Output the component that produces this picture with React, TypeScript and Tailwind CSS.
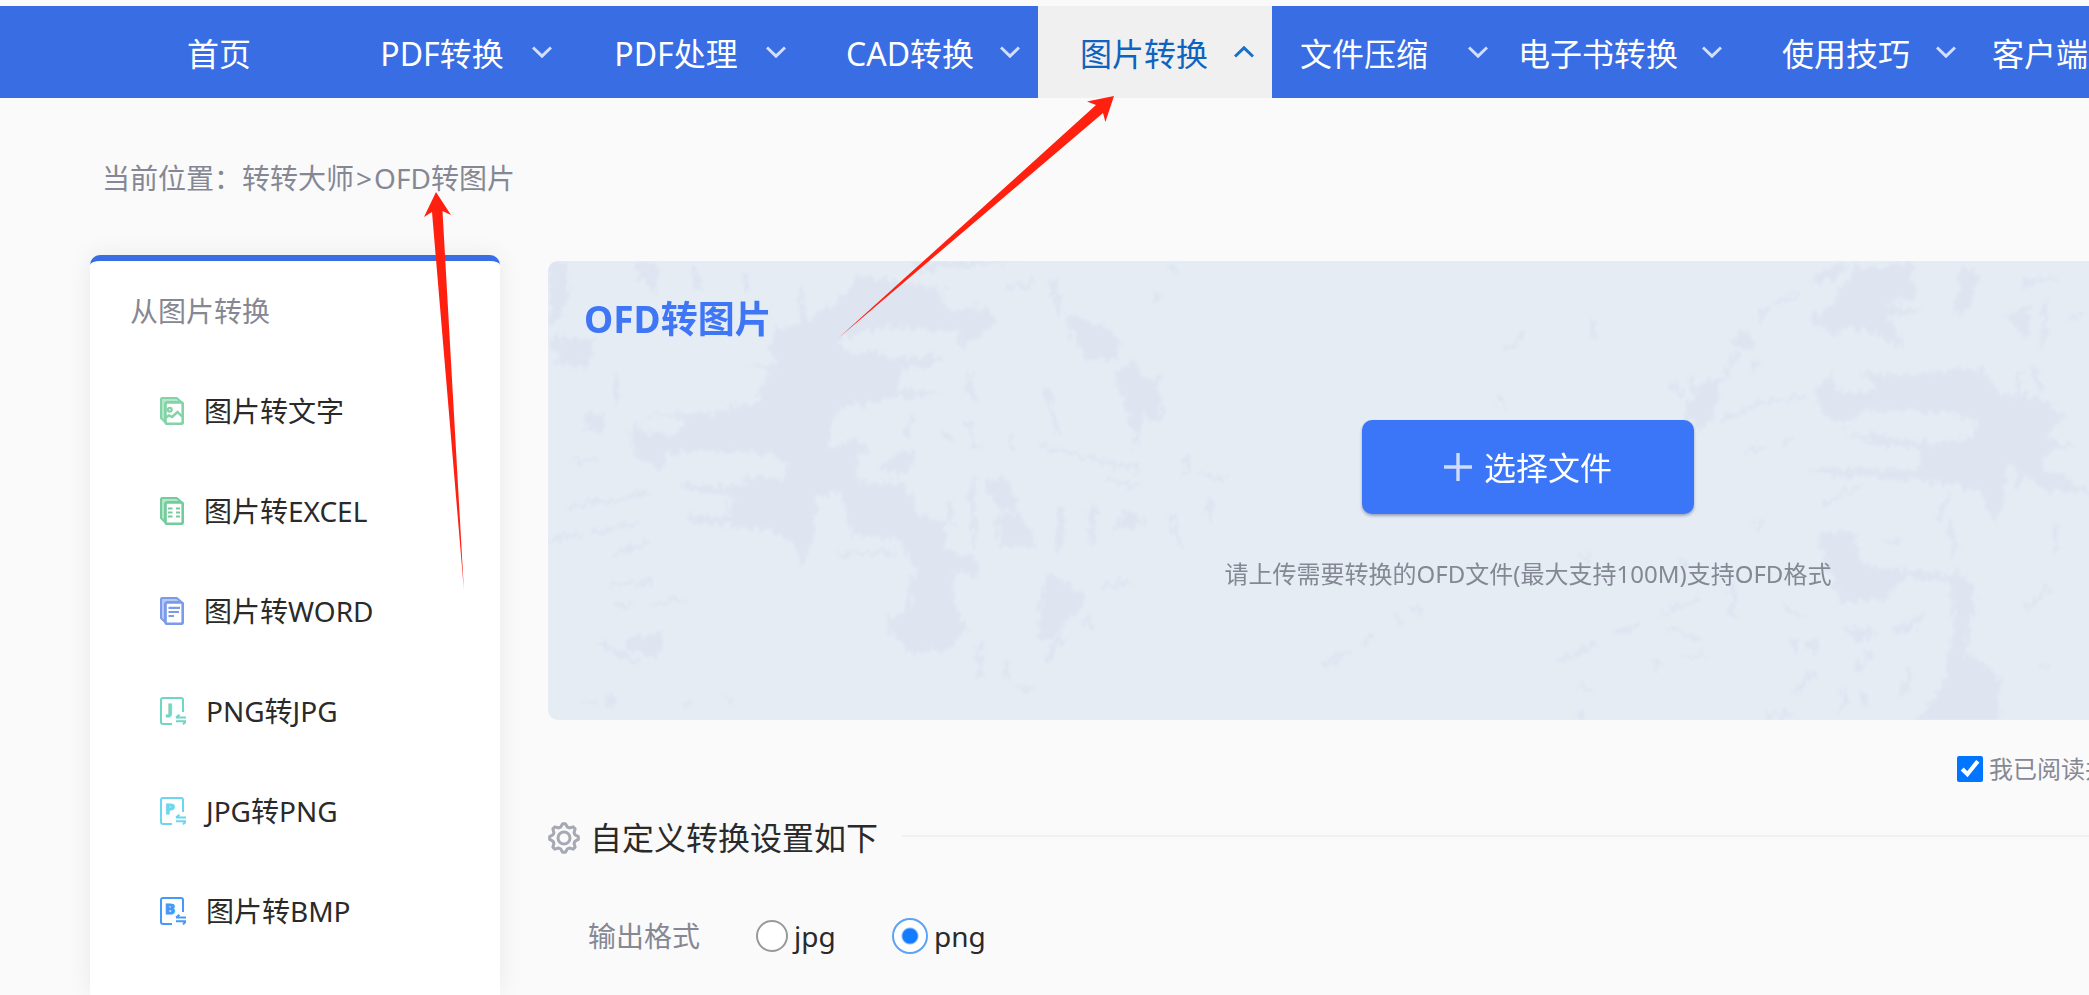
import React, { useState } from 'react';

type NavEntry = {
  label: string;
  menu?: boolean;
  pad?: string;
};

const navItems: NavEntry[] = [
  { label: '首页' },
  { label: 'PDF转换', menu: true, pad: 'pl-4' },
  { label: 'PDF处理', menu: true, pad: 'pl-4' },
  { label: 'CAD转换', menu: true, pad: 'pl-4' },
  { label: '图片转换', menu: true, pad: 'pl-4' },
  { label: '文件压缩', menu: true, pad: 'pr-3' },
  { label: '电子书转换', menu: true, pad: 'pr-3' },
  { label: '使用技巧', menu: true, pad: 'pl-4' },
  { label: '客户端下载', menu: true },
];

const Chevron = ({ up }: { up?: boolean }) => (
  <svg
    viewBox="0 0 20 12"
    className={up ? 'w-5 h-3 mr-[18px] text-[#1a6fc9]' : 'w-5 h-3 mr-[18px] text-[#d3defb]'}
    fill="none"
    stroke="currentColor"
    strokeWidth="3"
  >
    <path d={up ? 'M1 10.5 L10 1.8 L19 10.5' : 'M1 1.5 L10 10.2 L19 1.5'} />
  </svg>
);

const NavBar = ({ active }: { active: string }) => (
  <nav className="mt-1.5 pl-[102px] h-[92px] flex bg-[#386de4] text-white text-[32px] leading-10">
    {navItems.map((item) => (
      <a
        key={item.label}
        href="#"
        className={
          item.label === active
            ? 'w-[234px] shrink-0 flex items-center bg-[#f0f0f0] text-[#0f62bd]'
            : 'w-[234px] shrink-0 flex items-center'
        }
      >
        <span className={`flex-1 pt-1 text-center whitespace-nowrap ${item.pad ?? ''}`}>{item.label}</span>
        {item.menu && <Chevron up={item.label === active} />}
      </a>
    ))}
  </nav>
);

// Two stacked sheets, the front one carries the symbol
const SheetIcon = ({ color, tint, children }: { color: string; tint: string; children: React.ReactNode }) => (
  <svg viewBox="0 0 24 28" className="w-6 h-7 shrink-0" fill="none" stroke={color}>
    <path d="M2 0 H17 L22 5 V23 H6 L0 21 V2 Z" fill={tint} stroke="none" />
    <path d="M5 25 L1 21 V2.5 Q1 1 2.5 1 H16.5 L21 4.5" strokeWidth="2" />
    <rect x="5.4" y="5.4" width="17.4" height="21.4" rx="2" fill="#fff" strokeWidth="2.8" />
    {children}
  </svg>
);

const PictureIcon = () => (
  <SheetIcon color="#82d3a6" tint="#b4e6ca">
    <circle cx="9.8" cy="12.8" r="1.9" strokeWidth="2.2" />
    <path d="M6 20.5 L9 18.5 L12 20 L17.5 15 L22 19.5" strokeWidth="2.4" />
  </SheetIcon>
);

const ExcelIcon = () => (
  <SheetIcon color="#74cc9c" tint="#b4e6ca">
    <path d="M8 11.5 H12.5 M16 11.5 H20 M8 15.5 H12.5 M16 15.5 H20 M8 19.5 H12.5 M16 19.5 H20" strokeWidth="2.2" />
  </SheetIcon>
);

const WordIcon = () => (
  <SheetIcon color="#7b9bea" tint="#b6c8f8">
    <path d="M8.5 10.8 H20 M8.5 15 H19 M8.5 19 H14" strokeWidth="2.2" />
  </SheetIcon>
);

const LetterIcon = ({ letter, color }: { letter: string; color: string }) => (
  <svg viewBox="0 0 26 28" className="w-[26px] h-7 shrink-0" fill="none" stroke={color} strokeWidth="2">
    <path d="M23 15 V3 Q23 1 21 1 H3 Q1 1 1 3 V25 Q1 27 3 27 H12" />
    <text
      x="10"
      y="17"
      textAnchor="middle"
      fill={color}
      strokeWidth="1.2"
      className="font-['Noto_Sans',sans-serif] text-[15px] font-bold"
    >
      {letter}
    </text>
    <path d="M16 20.5 H26 M19.5 17.8 L16 20.5 M16 24.2 H26 M23 27.4 L26 24.2" />
  </svg>
);

const sideLinks = [
  { label: '图片转文字', icon: <PictureIcon /> },
  { label: '图片转EXCEL', icon: <ExcelIcon /> },
  { label: '图片转WORD', icon: <WordIcon /> },
  { label: 'PNG转JPG', icon: <LetterIcon letter="J" color="#70d6c4" /> },
  { label: 'JPG转PNG', icon: <LetterIcon letter="P" color="#6bd6ef" /> },
  { label: '图片转BMP', icon: <LetterIcon letter="B" color="#4599f7" /> },
];

const Sidebar = () => (
  <aside className="w-[410px] shrink-0 bg-white border-t-[6px] border-[#386de4] rounded-t-[10px] shadow-[0_0_24px_rgba(0,0,0,0.07)] pt-[30px] text-[28px] leading-10">
    <h2 className="pl-10 text-[#858894]">从图片转换</h2>
    <ul className="mt-[30px]">
      {sideLinks.map((link) => (
        <li key={link.label}>
          <a href="#" className="h-[100px] pl-[70px] flex items-center gap-5 text-[#2a2a2a]">
            {link.icon}
            <span>{link.label}</span>
          </a>
        </li>
      ))}
    </ul>
  </aside>
);

// Paint-like blotches behind the upload area
const PaintTexture = () => (
  <svg
    viewBox="0 0 1960 459"
    preserveAspectRatio="xMinYMin slice"
    className="absolute inset-0 w-full h-full"
    aria-hidden="true"
  >
    <defs>
      <filter id="rough" x="0" y="0" width="1960" height="459" filterUnits="userSpaceOnUse">
        <feTurbulence type="fractalNoise" baseFrequency="0.16 0.09" numOctaves="3" seed="4" result="noise" />
        <feDisplacementMap in="SourceGraphic" in2="noise" scale="17" xChannelSelector="R" yChannelSelector="G" />
        <feGaussianBlur stdDeviation="1.1" />
      </filter>
    </defs>
    <g filter="url(#rough)" fill="#dee5f1" stroke="#dee5f1" strokeWidth="0">
      <g transform="translate(-8 -11) scale(0.4975 0.3333)">
        <path
          fillRule="evenodd"
          d="M520 220 L470 240 L465 300 L475 345 L405 340 L470 365 L440 405 L435 460 L370 470 L385 490 L270 490 L225 490 L180 540 L190 620 L235 660 L255 650 L250 605 L330 605 L460 610 L500 640 L490 685 L400 680 L420 710 L285 700 L290 715 L380 740 L385 800 L290 795 L320 820 L480 845 L510 890 L530 950 L550 860 L560 740 L605 725 L625 850 L720 870 L760 960 L740 1000 L740 1080 L700 1105 L705 1145 L740 1205 L815 1200 L860 1140 L835 1060 L830 960 L880 980 L870 920 L820 900 L815 825 L760 790 L730 700 L640 700 L635 620 L665 600 L630 560 L580 600 L590 510 L610 470 L740 440 L810 430 L780 420 L720 420 L730 360 L815 330 L810 320 L700 325 L690 305 L620 310 L600 270 L680 235 L840 240 L840 290 L870 280 L915 220 L900 170 L820 180 L800 120 L830 120 L640 75 L600 150 L560 190 Z M200 525 A45 28 0 1 0 290 525 A45 28 0 1 0 200 525 Z"
        />
        <path d="M770 66 L960 33 L740 33 Z M1060 190 L1110 210 L1160 260 L1165 330 L1100 330 L1070 260 Z" />
        <path d="M1150 370 L1200 330 L1215 400 L1240 370 L1250 520 L1210 500 L1200 600 L1180 480 Z M680 650 L730 600 L760 610 L730 680 Z" />
        <path d="M890 700 L940 680 L960 780 L930 790 Z M920 800 L960 790 L1000 890 L920 890 Z M1040 780 L1055 780 L1050 900 L1040 900 Z" />
        <path d="M1010 1000 L1030 970 L1100 1040 L1030 1170 L1000 1170 Z M1180 780 L1200 770 L1210 830 L1150 840 Z" />
        <path d="M16 33 H60 L50 200 L16 220 Z M20 260 L110 270 L90 360 L30 330 Z M190 45 L240 35 L230 130 L200 80 Z M90 480 L130 500 L130 540 L90 540 Z M180 1160 L250 1150 L240 1215 L170 1200 Z" />
        <g fill="none" strokeWidth="11" strokeLinecap="round">
          <path d="M60 770 L220 730 M110 850 L190 818 M20 870 L80 855 M160 905 L215 880 M140 1010 L225 990 M150 1065 L185 1065 M225 1065 L290 1045 M120 1180 L200 1240 M600 915 L710 905" />
          <path d="M1030 90 L1045 190 M940 110 L990 100 M525 120 L530 210 M410 75 L420 115 M310 60 L320 110 M150 380 L155 450 M1270 40 L1280 75 M1240 120 V150" />
          <path d="M1010 590 L1200 660 M1150 690 L1200 710 M1300 625 V665 M1330 670 L1375 690 M1350 750 L1345 810 M1270 800 L1285 880 M1110 770 V880 M870 700 V880 M820 760 L825 820" />
          <path d="M740 500 V560 M860 510 L875 590 M940 560 L950 590 M810 550 L830 570 M1020 430 L1040 540 M1095 1110 L1110 1140 M1130 1010 L1180 1000 M1020 1230 L1050 1160 M940 1240 L935 1280 M880 1180 L885 1280 M960 1310 L990 1320 M300 1360 L290 1370 M380 1340 V1355 M140 1340 L145 1375 M90 1355 H105 M860 370 L870 440 M70 630 H115" />
        </g>
      </g>
      <g transform="translate(752 -11) scale(0.5033 0.3333)">
        <path d="M1110 365 L1210 375 L1330 350 L1370 380 L1390 430 L1470 440 L1520 490 L1480 560 L1545 590 L1480 600 L1480 660 L1580 730 L1480 720 L1410 640 L1400 740 L1380 820 L1350 720 L1280 700 L1010 665 L1040 650 L1230 660 L1230 600 L1080 560 L1160 560 L1270 580 L1340 560 L1345 510 L1290 490 L1190 480 L1110 490 L1080 530 L1040 490 L1020 420 L1060 370 L1060 420 L1130 430 L1140 400 Z" />
        <path d="M1100 50 L1220 40 L1220 150 L1160 160 L1240 180 L1170 200 L1200 300 L1140 250 L1080 230 L1070 260 L1010 210 L1060 160 Z M1310 50 L1345 50 L1345 120 L1320 200 L1300 190 Z" />
        <path d="M1400 200 L1450 165 L1450 270 L1420 230 Z M1010 100 L1040 60 L1090 40 L1060 90 Z M860 250 L890 240 L900 300 L870 290 Z M810 380 L840 380 L820 500 L790 550 L760 490 Z" />
        <path d="M1030 860 L1100 840 L1120 950 L1200 960 L1330 970 L1340 1060 L1320 1200 L1390 1280 L1390 1420 L1220 1420 L1280 1300 L1300 1100 L1290 990 L1200 985 L1160 1050 L1080 1060 L1050 980 Z M1170 1140 L1250 1080 L1210 1150 Z M1080 1130 L1150 1140 L1110 1180 Z" />
        <g fill="none" strokeWidth="11" strokeLinecap="round">
          <path d="M840 510 L920 455 L1000 440 M905 330 L900 370 M850 370 L865 310 M745 400 L755 440 M775 380 L785 430 M950 150 L990 130 M910 210 L925 180 M410 290 L440 262 M580 215 L585 260 M395 440 L405 475" />
          <path d="M720 1090 L795 1040 M515 1235 L590 1180 M50 1240 L95 1212 M130 1185 L140 1155 M630 1155 L665 1125 M860 1000 V1100 M735 1135 L790 1165 M770 1220 L800 1210 M705 1230 L715 1250 M190 1100 L200 1115 M225 1070 L235 1085 M555 910 L570 930 M560 1310 L580 1320 M555 1400 V1380" />
          <path d="M960 1060 L995 1100 M980 1330 L1020 1270 M930 1400 L975 1390 M1110 1260 L1130 1210 M985 1170 V1200 M1020 1170 V1200 M1080 1320 V1380 M1120 1330 V1370 M1210 1260 L1200 1330 M1450 1070 L1490 1010 M1500 830 V900 M1430 650 L1425 710 M1290 810 L1300 910" />
          <path d="M1460 350 L1470 420 M1430 370 L1425 430 M1480 160 L1475 290 M1440 100 L1500 80 M1530 200 H1550 M1045 760 L1110 710 M1270 800 L1285 740 M910 820 V840 M890 610 L915 590 M960 580 L980 570 M1160 880 L1190 870 M1470 1250 H1480 M760 930 L765 940" />
        </g>
      </g>
    </g>
  </svg>
);

const GearIcon = () => {
  // eight rounded teeth around the rim
  const points = Array.from({ length: 32 }, (_, i) => {
    const angle = ((i * 11.25 - 16.875) * Math.PI) / 180;
    const radius = i % 4 === 1 || i % 4 === 2 ? 14.4 : 11.4;
    return `${(16 + radius * Math.sin(angle)).toFixed(2)},${(16 - radius * Math.cos(angle)).toFixed(2)}`;
  });
  return (
    <svg viewBox="0 0 32 32" className="w-8 h-8 shrink-0" fill="none" stroke="#a6a9b3" strokeWidth="3" strokeLinejoin="round">
      <polygon points={points.join(' ')} />
      <circle cx="16" cy="16" r="6" />
    </svg>
  );
};

const UploadPanel = () => (
  <section className="relative h-[459px] rounded-[10px] overflow-hidden bg-[#e5ecf4]">
    <PaintTexture />
    <div className="relative pt-[34px]">
      <h1 className="pl-9 text-[37px] leading-[48px] font-bold text-[#3e76f6]">OFD转图片</h1>
      <div className="mt-[77px] flex flex-col items-center">
        <button
          type="button"
          className="w-[332px] h-[94px] flex items-center justify-center gap-3 rounded-[10px] bg-[#3b76f8] text-white text-[32px] leading-10 shadow-[0_2px_3px_rgba(40,60,110,0.4)]"
        >
          <svg viewBox="0 0 28 28" className="w-7 h-7" stroke="#d0dcfd" strokeWidth="3.4">
            <path d="M14 0 V28 M0 14 H28" />
          </svg>
          <span className="pt-0.5">选择文件</span>
        </button>
        <p className="mt-11 text-2xl text-[#858894]">请上传需要转换的OFD文件(最大支持100M)支持OFD格式</p>
      </div>
    </div>
  </section>
);

const Settings = () => {
  const [agreed, setAgreed] = useState(true);
  const [format, setFormat] = useState('png');

  return (
    <>
      <div className="pt-[31px] flex justify-end">
        <label className="w-[551px] flex items-center gap-1.5 text-2xl leading-9 text-[#858894]">
          <input
            type="checkbox"
            checked={agreed}
            onChange={(e) => setAgreed(e.target.checked)}
            className="w-[26px] h-[26px] accent-[#0075ff]"
          />
          我已阅读并同意《服务协议》
        </label>
      </div>

      <div className="mt-[31px] flex items-center">
        <GearIcon />
        <h2 className="ml-2.5 text-[32px] leading-10 text-[#2a2a2a]">自定义转换设置如下</h2>
        <div className="ml-6 mb-1 flex-1 h-0.5 bg-[#f0f0f0]" />
      </div>

      <fieldset className="mt-[58px] pl-10 flex items-center text-[28px] leading-10 text-[#2a2a2a]">
        <span className="w-[168px] text-[#858894]">输出格式</span>
        {['jpg', 'png'].map((value) => (
          <label key={value} className="w-[136px] flex items-center gap-1.5">
            <input
              type="radio"
              name="format"
              value={value}
              checked={format === value}
              onChange={() => setFormat(value)}
              className="appearance-none w-8 h-8 rounded-full bg-white border-2 border-[#999999] checked:w-9 checked:h-9 checked:border-[#5ba3f8] checked:bg-[radial-gradient(circle,#167cff_7px,#ffffff_9px)]"
            />
            {value}
          </label>
        ))}
      </fieldset>
    </>
  );
};

const Arrows = () => (
  <svg
    viewBox="0 0 1200 600"
    className="absolute left-0 top-0 w-[1200px] h-[600px] pointer-events-none"
    fill="#ff2010"
    aria-hidden="true"
  >
    <polygon points="436,192 451,215 442.5,211 463.9,590 432,212 424,217" />
    <polygon points="1114,96 1105.4,122 1103,113 838.5,338 1096,105 1087,101.5" />
  </svg>
);

export default function App() {
  return (
    <div className="relative min-h-screen overflow-hidden bg-[#fafafa] font-['Noto_Sans','Noto_Sans_CJK_SC',sans-serif]">
      <div className="min-w-[2598px] min-h-screen flex flex-col">
        <NavBar active="图片转换" />
        <div className="px-[102px] pt-[60px] pb-[57px] flex gap-0.5 text-[28px] leading-10 text-[#858894]">
          <span>
            当前位置：<a href="#">转转大师</a>
          </span>
          <span>&gt;</span>
          <a href="#">OFD转图片</a>
        </div>
        <div className="flex-1 px-[90px] flex gap-12">
          <Sidebar />
          <main className="flex-1 pt-1.5">
            <UploadPanel />
            <Settings />
          </main>
        </div>
      </div>
      <Arrows />
    </div>
  );
}
